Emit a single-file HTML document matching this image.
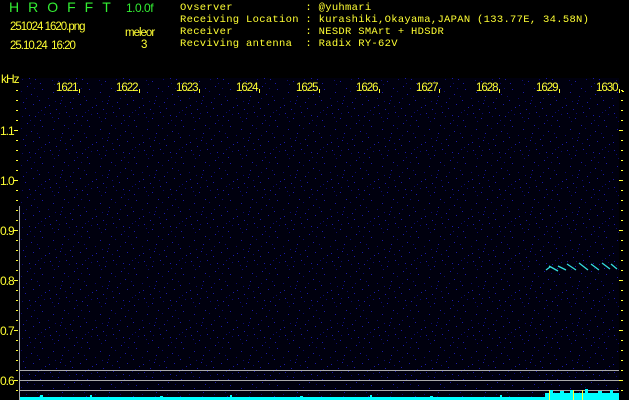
<!DOCTYPE html>
<html><head><meta charset="utf-8"><style>
body{margin:0;width:629px;height:400px;background:#000;overflow:hidden;position:relative;font-family:"Liberation Mono",monospace;color:#ffff33}
.t{position:absolute;white-space:pre;line-height:12px}
.h{font-family:"Liberation Sans",sans-serif;font-size:11.5px;letter-spacing:-1px}
.hd{font-size:10.5px;letter-spacing:0.3px}
</style></head><body>
<div class="t" style="left:9px;top:1px;color:#33ee33;font-family:'Liberation Sans',sans-serif;font-size:14px;letter-spacing:9px">HROFFT</div>
<div class="t h" style="left:126px;top:2px;color:#33ee33;font-size:12px;letter-spacing:-0.5px">1.0.0f</div>
<div class="t h" style="left:10px;top:21px">251024 1620.png</div>
<div class="t h" style="left:10px;top:40px">25.10.24  16:20</div>
<div class="t h" style="left:125px;top:27px">meleor</div>
<div class="t h" style="left:141px;top:39px">3</div>
<div class="t hd" style="left:180px;top:2px">Ovserver           : @yuhmari
Receiving Location : kurashiki,Okayama,JAPAN (133.77E, 34.58N)
Receiver           : NESDR SMArt + HDSDR
Recviving antenna  : Radix RY-62V</div>
<div class="t h" style="left:1px;top:73px;font-size:12px">kHz</div>
<svg width="629" height="400" style="position:absolute;left:0;top:0">
<defs><pattern id="n" width="47" height="37" patternUnits="userSpaceOnUse">
<g fill="#1a1aa8">
<rect x="3" y="2" width="1" height="1"/><rect x="11" y="7" width="1" height="1"/><rect x="19" y="1" width="1" height="1"/><rect x="27" y="12" width="1" height="1"/><rect x="35" y="5" width="1" height="1"/><rect x="42" y="15" width="1" height="1"/><rect x="6" y="18" width="1" height="1"/><rect x="15" y="22" width="1" height="1"/><rect x="23" y="28" width="1" height="1"/><rect x="31" y="20" width="1" height="1"/><rect x="39" y="26" width="1" height="1"/><rect x="45" y="33" width="1" height="1"/><rect x="2" y="31" width="1" height="1"/><rect x="9" y="35" width="1" height="1"/><rect x="17" y="14" width="1" height="1"/><rect x="25" y="34" width="1" height="1"/><rect x="33" y="30" width="1" height="1"/><rect x="40" y="9" width="1" height="1"/><rect x="13" y="29" width="1" height="1"/><rect x="29" y="4" width="1" height="1"/>
</g><g fill="#0c0c70">
<rect x="7" y="10" width="1" height="1"/><rect x="21" y="17" width="1" height="1"/><rect x="37" y="22" width="1" height="1"/><rect x="1" y="24" width="1" height="1"/><rect x="44" y="3" width="1" height="1"/><rect x="12" y="2" width="1" height="1"/><rect x="26" y="24" width="1" height="1"/><rect x="34" y="14" width="1" height="1"/><rect x="18" y="32" width="1" height="1"/><rect x="41" y="36" width="1" height="1"/><rect x="5" y="6" width="1" height="1"/><rect x="30" y="9" width="1" height="1"/><rect x="14" y="26" width="1" height="1"/><rect x="38" y="1" width="1" height="1"/><rect x="22" y="5" width="1" height="1"/><rect x="8" y="27" width="1" height="1"/>
</g></pattern></defs>
<rect x="20" y="78" width="599" height="322" fill="#00000e"/>
<rect x="20" y="78" width="599" height="322" fill="url(#n)"/>
<g fill="#ffff33" font-family="Liberation Sans" font-size="11.5" letter-spacing="-1">
<text x="56" y="91">1621</text><text x="116" y="91">1622</text><text x="176" y="91">1623</text><text x="236" y="91">1624</text><text x="296" y="91">1625</text><text x="356" y="91">1626</text><text x="416" y="91">1627</text><text x="476" y="91">1628</text><text x="536" y="91">1629</text><text x="596" y="91">1630</text>
<rect x="79" y="89" width="1" height="4"/><rect x="139" y="89" width="1" height="4"/><rect x="199" y="89" width="1" height="4"/><rect x="259" y="89" width="1" height="4"/><rect x="319" y="89" width="1" height="4"/><rect x="379" y="89" width="1" height="4"/><rect x="439" y="89" width="1" height="4"/><rect x="499" y="89" width="1" height="4"/><rect x="559" y="89" width="1" height="4"/><rect x="619" y="89" width="1" height="4"/><rect x="622" y="91" width="2" height="1"/><rect x="16" y="90" width="2" height="1"/>
<text x="0" y="135" font-size="12">1.1</text><text x="0" y="185" font-size="12">1.0</text><text x="0" y="235" font-size="12">0.9</text><text x="0" y="285" font-size="12">0.8</text><text x="0" y="335" font-size="12">0.7</text><text x="0" y="385" font-size="12">0.6</text>
</g>
<g fill="#ffff33" id="tk">
<rect x="16" y="90" width="2" height="1"/><rect x="16" y="100" width="2" height="1"/><rect x="16" y="110" width="2" height="1"/><rect x="16" y="120" width="2" height="1"/><rect x="14" y="130" width="4" height="1"/><rect x="16" y="140" width="2" height="1"/><rect x="16" y="150" width="2" height="1"/><rect x="16" y="160" width="2" height="1"/><rect x="16" y="170" width="2" height="1"/><rect x="14" y="180" width="4" height="1"/><rect x="16" y="190" width="2" height="1"/><rect x="16" y="200" width="2" height="1"/><rect x="16" y="210" width="2" height="1"/><rect x="16" y="220" width="2" height="1"/><rect x="14" y="230" width="4" height="1"/><rect x="16" y="240" width="2" height="1"/><rect x="16" y="250" width="2" height="1"/><rect x="16" y="260" width="2" height="1"/><rect x="16" y="270" width="2" height="1"/><rect x="14" y="280" width="4" height="1"/><rect x="16" y="290" width="2" height="1"/><rect x="16" y="300" width="2" height="1"/><rect x="16" y="310" width="2" height="1"/><rect x="16" y="320" width="2" height="1"/><rect x="14" y="330" width="4" height="1"/><rect x="16" y="340" width="2" height="1"/><rect x="16" y="350" width="2" height="1"/><rect x="16" y="360" width="2" height="1"/><rect x="16" y="370" width="2" height="1"/><rect x="14" y="380" width="4" height="1"/><rect x="16" y="390" width="2" height="1"/>
</g>
<use href="#tk" x="605"/>
<rect x="19" y="206" width="1" height="194" fill="#aaa"/>
<rect x="20" y="370" width="599" height="1" fill="#aaa"/>
<rect x="20" y="380" width="599" height="1" fill="#aaa"/>
<rect x="20" y="390" width="599" height="1" fill="#aaa"/>
<g stroke="#33dddd" stroke-width="1.3" fill="none">
<path d="M546 270l4-3M549 266l9 5M558 266l8 4M567 264l9 6M579 263l9 7M591 264l8 6M602 263l8 6M611 264l6 5"/>
</g>
<g fill="#00ffff">
<rect x="20" y="397" width="525" height="3"/>
<rect x="40" y="395" width="3" height="5"/><rect x="90" y="395" width="2" height="5"/><rect x="160" y="396" width="3" height="4"/><rect x="230" y="395" width="2" height="5"/><rect x="300" y="396" width="3" height="4"/><rect x="370" y="395" width="2" height="5"/><rect x="430" y="396" width="3" height="4"/><rect x="500" y="395" width="2" height="5"/>
<rect x="545" y="393" width="74" height="7"/>
<rect x="550" y="390" width="3" height="3"/><rect x="560" y="391" width="4" height="2"/><rect x="570" y="390" width="3" height="3"/><rect x="585" y="389" width="3" height="4"/><rect x="598" y="391" width="4" height="2"/><rect x="610" y="390" width="3" height="3"/>
</g>
<rect x="549" y="390" width="1" height="10" fill="#ff3"/><rect x="573" y="390" width="1" height="10" fill="#ff3"/><rect x="582" y="390" width="1" height="10" fill="#ff3"/>
</svg>
</body></html>
